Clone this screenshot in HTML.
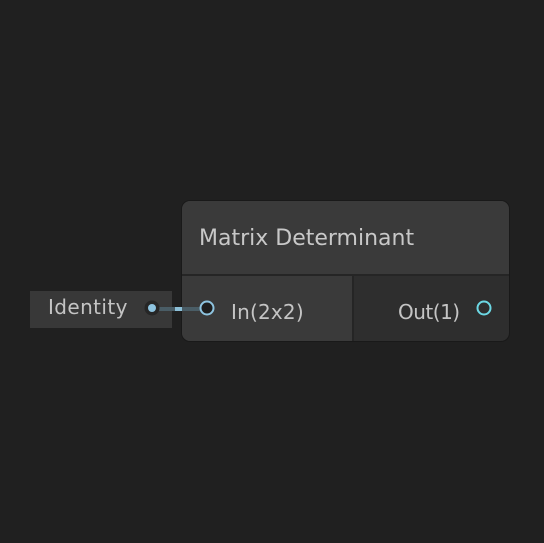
<!DOCTYPE html>
<html><head><style>
html,body{margin:0;padding:0;background:#202020;width:544px;height:543px;overflow:hidden;font-family:"DejaVu Sans","Liberation Sans",sans-serif;}
.abs{position:absolute;}
</style></head><body>
<div class="abs" style="left:30px;top:291px;width:142px;height:37px;background:#383838;"></div>
<div class="abs" style="left:48px;top:293px;font-size:20px;color:#c4c4c4;line-height:28px;letter-spacing:0.4px;">Identity</div>
<div class="abs" style="left:181px;top:200px;width:329px;height:142px;border-radius:9px;background:#191919;"></div>
<div class="abs" style="left:182px;top:201px;width:327px;height:140px;border-radius:8px;overflow:hidden;background:#2e2e2e;">
  <div class="abs" style="left:0;top:0;width:327px;height:73px;background:#3a3a3a;"></div>
  <div class="abs" style="left:0;top:73px;width:327px;height:2px;background:#252525;"></div>
  <div class="abs" style="left:0;top:75px;width:170px;height:65px;background:#3a3a3a;"></div>
  <div class="abs" style="left:170px;top:75px;width:2px;height:65px;background:#252525;"></div>
  <div class="abs" style="left:17px;top:24px;font-size:22px;color:#c8c8c8;line-height:28px;">Matrix Determinant</div>
  <div class="abs" style="left:49px;top:97px;font-size:20px;color:#c4c4c4;line-height:28px;letter-spacing:0.2px;">In(2x2)</div>
  <div class="abs" style="left:216px;top:97px;font-size:20px;color:#c4c4c4;line-height:28px;letter-spacing:-0.5px;">Out(1)</div>
</div>
<svg class="abs" style="left:0;top:0" width="544" height="543">
  <line x1="156" y1="309" x2="201" y2="309" stroke="#4a5d66" stroke-width="4"/>
  <line x1="175" y1="309" x2="182" y2="309" stroke="#8cc0d8" stroke-width="4"/>
  <circle cx="152" cy="308" r="7.5" fill="#262626"/>
  <circle cx="152" cy="308" r="4" fill="#8ec4e0"/>
  <circle cx="207" cy="308" r="6.5" fill="#1e1e1e" stroke="#8ec4e0" stroke-width="2"/>
  <circle cx="484" cy="308" r="6.5" fill="#2e2e2e" stroke="#6cd8e4" stroke-width="2"/>
</svg>
</body></html>
